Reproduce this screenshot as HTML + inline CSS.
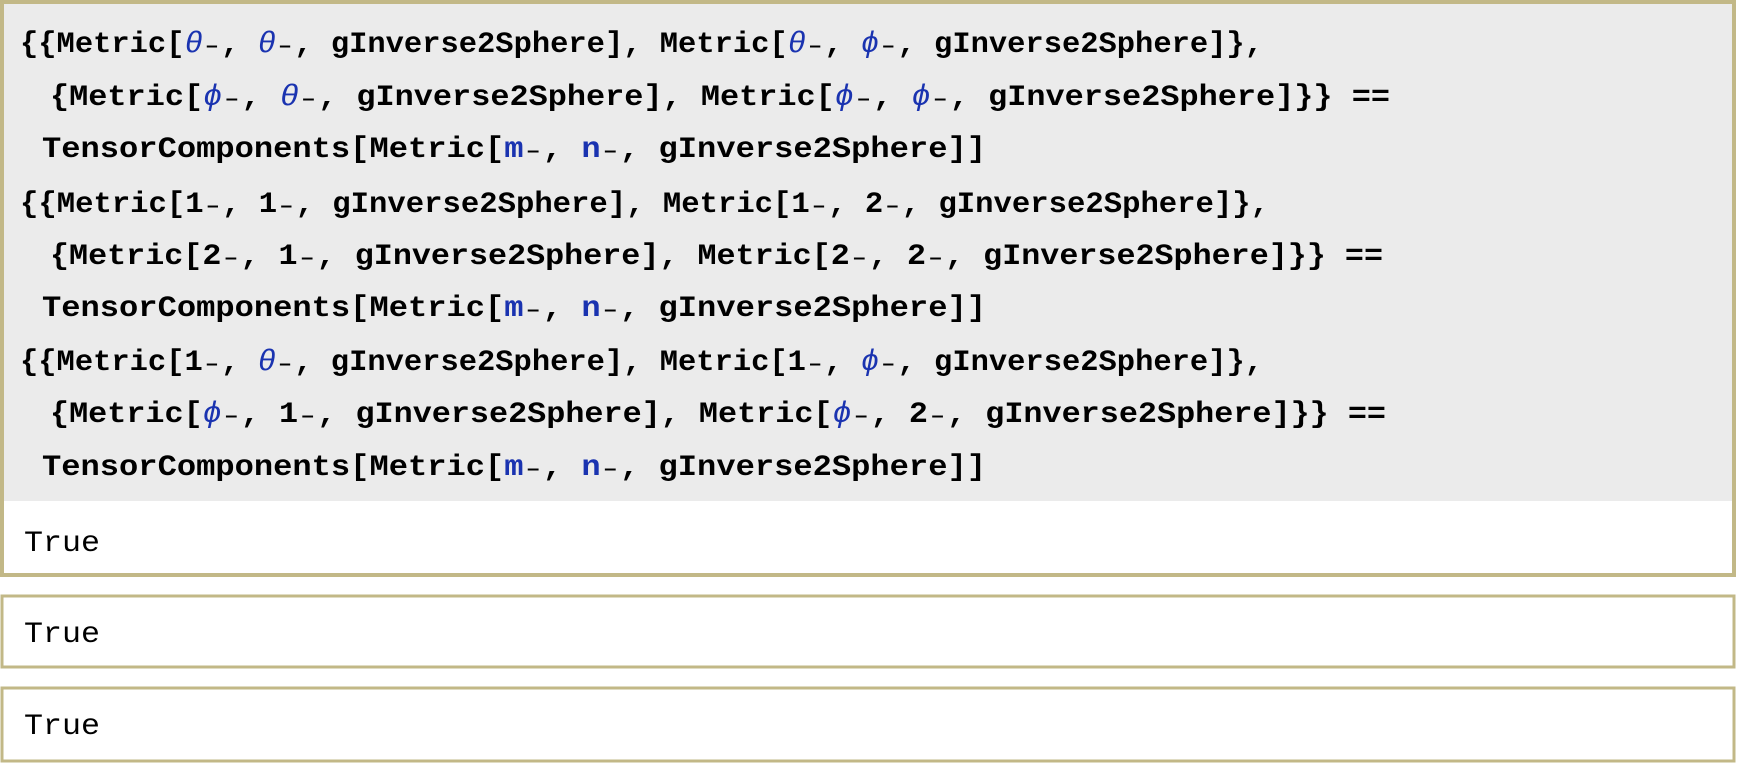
<!DOCTYPE html>
<html><head><meta charset="utf-8"><style>
html,body{margin:0;padding:0;width:1738px;height:765px;overflow:hidden;background:#fff}
svg{display:block}
text{font-family:"Liberation Mono","DejaVu Sans Mono",monospace;font-size:30px;fill:#000}
.b{font-weight:bold}
.v{fill:#1a33b0;font-style:italic;font-weight:normal}
.m{fill:#1a33b0;font-weight:bold}
.s{font-size:22px}
</style></head><body>
<svg width="1738" height="765" xmlns="http://www.w3.org/2000/svg">
<rect x="0" y="0" width="1738" height="765" fill="#fff"/>
<rect x="2" y="2" width="1732" height="499" fill="#ebebeb"/>
<rect x="2" y="2" width="1732" height="573" fill="none" stroke="#c2b887" stroke-width="4"/>
<path d="M2 596 H1734 V667 H2 Z" fill="none" stroke="#c2b887" stroke-width="3"/>
<path d="M2 688 H1734 V761 H2 Z" fill="none" stroke="#c2b887" stroke-width="3"/>

<g class="b">
<text x="20" y="52" textLength="1243" lengthAdjust="spacingAndGlyphs">{{Metric[<tspan class="v">θ</tspan>₋, <tspan class="v">θ</tspan>₋, gInverse2Sphere], Metric[<tspan class="v">θ</tspan>₋, <tspan class="v">ϕ</tspan>₋, gInverse2Sphere]},</text>
<text x="50" y="105" textLength="1340" lengthAdjust="spacingAndGlyphs">{Metric[<tspan class="v">ϕ</tspan>₋, <tspan class="v">θ</tspan>₋, gInverse2Sphere], Metric[<tspan class="v">ϕ</tspan>₋, <tspan class="v">ϕ</tspan>₋, gInverse2Sphere]}} ==</text>
<text x="42" y="157" textLength="944" lengthAdjust="spacingAndGlyphs">TensorComponents[Metric[<tspan class="m">m</tspan>₋, <tspan class="m">n</tspan>₋, gInverse2Sphere]]</text>

<text x="20" y="212" textLength="1249" lengthAdjust="spacingAndGlyphs">{{Metric[1₋, 1₋, gInverse2Sphere], Metric[1₋, 2₋, gInverse2Sphere]},</text>
<text x="50" y="264" textLength="1333" lengthAdjust="spacingAndGlyphs">{Metric[2₋, 1₋, gInverse2Sphere], Metric[2₋, 2₋, gInverse2Sphere]}} ==</text>
<text x="42" y="316" textLength="944" lengthAdjust="spacingAndGlyphs">TensorComponents[Metric[<tspan class="m">m</tspan>₋, <tspan class="m">n</tspan>₋, gInverse2Sphere]]</text>

<text x="20" y="370" textLength="1243" lengthAdjust="spacingAndGlyphs">{{Metric[1₋, <tspan class="v">θ</tspan>₋, gInverse2Sphere], Metric[1₋, <tspan class="v">ϕ</tspan>₋, gInverse2Sphere]},</text>
<text x="50" y="422" textLength="1336" lengthAdjust="spacingAndGlyphs">{Metric[<tspan class="v">ϕ</tspan>₋, 1₋, gInverse2Sphere], Metric[<tspan class="v">ϕ</tspan>₋, 2₋, gInverse2Sphere]}} ==</text>
<text x="42" y="475" textLength="944" lengthAdjust="spacingAndGlyphs">TensorComponents[Metric[<tspan class="m">m</tspan>₋, <tspan class="m">n</tspan>₋, gInverse2Sphere]]</text>
</g>

<text x="24" y="551" textLength="76" lengthAdjust="spacingAndGlyphs">True</text>
<text x="24" y="642" textLength="76" lengthAdjust="spacingAndGlyphs">True</text>
<text x="24" y="734" textLength="76" lengthAdjust="spacingAndGlyphs">True</text>
</svg>
</body></html>
